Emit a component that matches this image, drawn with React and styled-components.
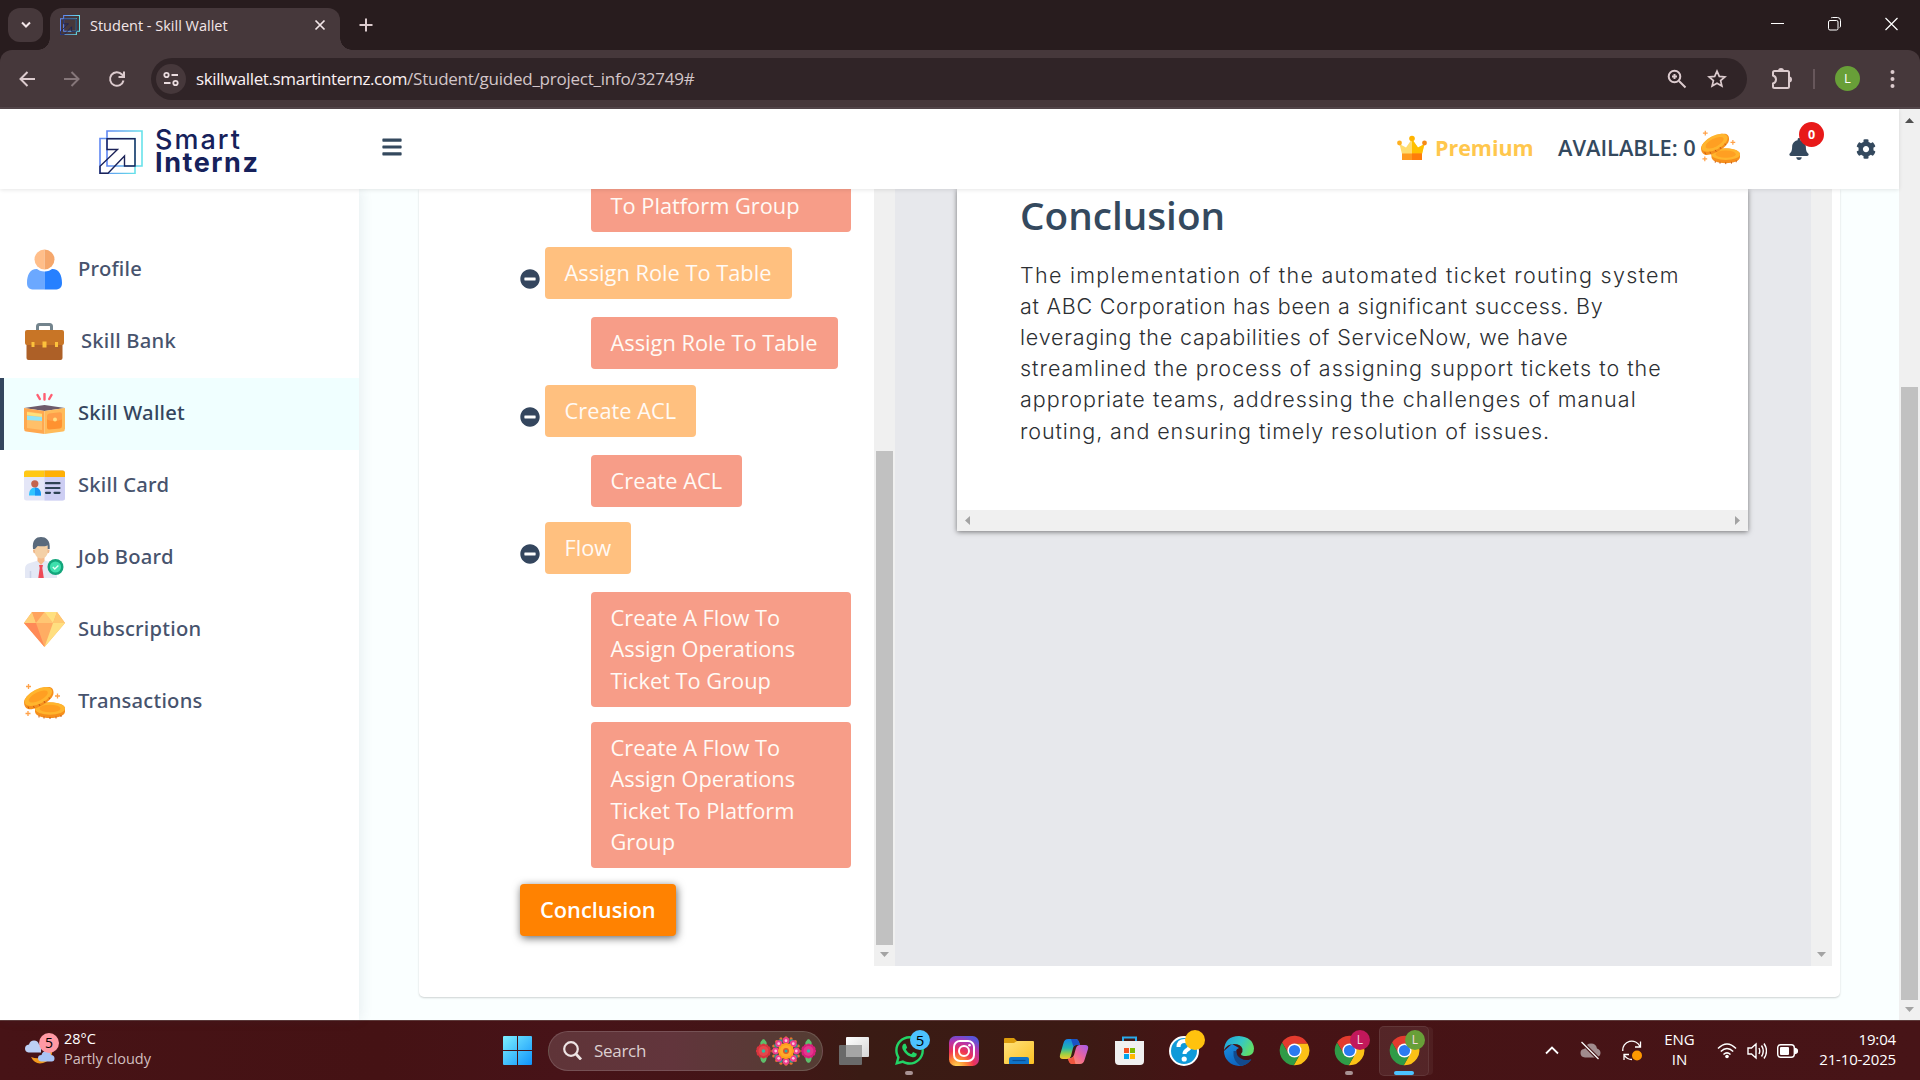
import React from "react";
import styled, { createGlobalStyle, css } from "styled-components";
import { FaBars, FaBell, FaCog, FaMinusCircle, FaWhatsapp } from "react-icons/fa";

const OPEN = `"Open Sans", "Noto Sans", sans-serif`;
const NOTO = `"Noto Sans", "Open Sans", sans-serif`;
const SYS = `"Open Sans", "Noto Sans", sans-serif`;
const GEO = `Inter, Lato, sans-serif`;

const Global = createGlobalStyle`
  * { box-sizing: border-box; }
  body { margin: 0; background: #fff; overflow: hidden; font-family: ${OPEN}; }
  svg { display: block; flex: none; }
`;

const Screen = styled.div`
  width: 1920px;
  height: 1080px;
  display: flex;
  flex-direction: column;
  overflow: hidden;
`;

/* ---------- browser chrome ---------- */
const TabStrip = styled.div`
  height: 50px;
  flex: none;
  background: #281c1e;
  display: flex;
  align-items: flex-start;
  padding: 8px 22px 0 8px;
`;
const TabSearch = styled.div`
  width: 35px;
  height: 34px;
  border-radius: 12px;
  background: #46383b;
  display: flex;
  align-items: center;
  justify-content: center;
`;
const Tab = styled.div`
  position: relative;
  margin-left: 7px;
  width: 290px;
  height: 42px;
  border-radius: 12px 12px 0 0;
  background: #46383b;
  display: flex;
  align-items: center;
  padding: 0 14px 8px 10px;
  color: #f3e6e8;
  &::before, &::after {
    content: "";
    position: absolute;
    bottom: 0;
    width: 12px;
    height: 12px;
  }
  &::before { left: -12px; background: radial-gradient(circle at 0 0, transparent 11.5px, #46383b 12px); }
  &::after { right: -12px; background: radial-gradient(circle at 100% 0, transparent 11.5px, #46383b 12px); }
`;
const TabTitle = styled.span`
  flex: 1;
  margin: 1px 0 0 10px;
  font: 400 14.5px/20px ${SYS};
  white-space: nowrap;
`;
const NewTab = styled.div`
  margin: 10px 0 0 19px;
`;
const WindowControls = styled.div`
  margin: 9px 0 0 auto;
  display: flex;
  align-items: center;
  gap: 44px;
`;
const ToolbarBack = styled.div`
  background: #281c1e;
  flex: none;
`;
const Toolbar = styled.div`
  height: 59px;
  background: #46383b;
  border-radius: 12px 12px 0 0;
  border-bottom: 2px solid #53464a;
  display: flex;
  align-items: center;
  padding-left: 18px;
`;
const NavButtons = styled.div`
  display: flex;
  gap: 27px;
  width: 133px;
`;
const AddressBar = styled.div`
  width: 1596px;
  height: 42px;
  border-radius: 21px;
  background: #302427;
  display: flex;
  align-items: center;
  padding: 0 20px 0 5px;
`;
const SiteInfo = styled.div`
  width: 30px;
  height: 30px;
  border-radius: 50%;
  background: #46383b;
  display: flex;
  align-items: center;
  justify-content: center;
`;
const Url = styled.div`
  flex: 1;
  margin-left: 10px;
  font: 400 17px/26px ${SYS};
  letter-spacing: -0.245px;
  color: #d3c6c9;
  white-space: nowrap;
  b { font-weight: 400; color: #fbf1f3; letter-spacing: -0.38px; }
`;
const AddressActions = styled.div`
  display: flex;
  gap: 20px;
`;
const ToolbarActions = styled.div`
  display: flex;
  align-items: center;
  margin-left: 23px;
`;
const Divider = styled.span`
  width: 2px;
  height: 20px;
  margin: 0 20px;
  background: #67575b;
`;
const ProfileDot = styled.span`
  width: 25px;
  height: 25px;
  border-radius: 50%;
  background: #689f38;
  color: #fff;
  font: 400 13px/25px ${SYS};
  text-align: center;
  margin-right: 30px;
`;

/* ---------- page shell ---------- */
const PageRow = styled.div`
  height: 911px;
  flex: none;
  display: flex;
`;
const Page = styled.div`
  width: 1899px;
  display: flex;
  flex-direction: column;
`;
const Header = styled.header`
  position: relative;
  z-index: 2;
  height: 80px;
  flex: none;
  background: #fff;
  display: flex;
  align-items: center;
  box-shadow: 0 1px 4px rgba(0, 0, 0, 0.1);
`;
const Brand = styled.div`
  width: 359px;
  padding: 5px 0 0 99px;
  display: flex;
  align-items: center;
  gap: 12px;
`;
const BrandName = styled.div`
  color: #16215b;
  font: 500 27px/23px ${GEO};
  padding-bottom: 1px;
  span { display: block; white-space: nowrap; }
`;
const BrandTop = styled.span`
  letter-spacing: 2px;
`;
const BrandBottom = styled.span`
  font-weight: 700;
  letter-spacing: 1.55px;
`;
const MenuToggle = styled.div`
  margin: 0 0 4px 22px;
  color: #34495e;
  font-size: 22px;
`;
const HeaderRight = styled.div`
  margin-left: auto;
  height: 80px;
  display: flex;
  align-items: center;
  color: #34495e;
`;
const CrownWrap = styled.div`
  padding-bottom: 3px;
`;
const CoinWrap = styled.div`
  padding-bottom: 4px;
`;
const Premium = styled.span`
  margin: 0 24px 2px 8px;
  width: 99px;
  font: 700 21.5px/30px ${OPEN};
  letter-spacing: -0.05px;
  color: #ffc74d;
  white-space: nowrap;
`;
const Available = styled.span`
  width: 138px;
  margin: 0 5px 2px 0;
  font: 600 21.8px/30px ${OPEN};
  white-space: nowrap;
`;
const BellWrap = styled.div`
  position: relative;
  margin: 0 46px 0 48px;
  font-size: 22px;
`;
const Badge = styled.span`
  position: absolute;
  left: 11px;
  top: -16px;
  width: 25px;
  height: 25px;
  border-radius: 50%;
  background: #e81919;
  color: #fff;
  font: 700 12.5px/25px ${OPEN};
  text-align: center;
`;
const GearWrap = styled.div`
  font-size: 20px;
  margin: 0 23px 1px 0;
`;
const Body = styled.div`
  flex: 1;
  display: flex;
  min-height: 0;
`;
const Sidebar = styled.nav`
  position: relative;
  z-index: 1;
  width: 359px;
  padding-top: 45px;
  background: #fff;
  box-shadow: 2px 0 12px rgba(40, 70, 90, 0.09);
`;
const NavItem = styled.div`
  height: 72px;
  display: flex;
  align-items: center;
  gap: ${(p) => p.$gap || 13}px;
  padding-left: 20px;
  border-left: 4px solid ${(p) => (p.$active ? "#34465e" : "transparent")};
  background: ${(p) => (p.$active ? "#f0ffff" : "transparent")};
  color: ${(p) => (p.$active ? "#34465e" : "#47536d")};
  > svg { margin-bottom: 1px; }
`;
const NavLabel = styled.span`
  padding-bottom: 5px;
  font: 500 20.2px/28px ${NOTO};
  letter-spacing: 0.22px;
  white-space: nowrap;
`;
const Main = styled.main`
  flex: 1;
  background: #faffff;
  padding-left: 60px;
`;
const Card = styled.section`
  width: 1421px;
  height: 808px;
  background: #fff;
  border-radius: 0 0 5px 5px;
  box-shadow: 0 1px 2px rgba(0, 0, 0, 0.18);
`;
const Panes = styled.div`
  height: 777px;
  display: flex;
`;
const Tree = styled.div`
  width: 455px;
  padding-left: 101px;
`;
const TreeGroup = styled.div`
  margin-top: ${(p) => p.$gap || 0}px;
`;
const StepRow = styled.div`
  display: flex;
  align-items: center;
  gap: 5px;
  color: #34465e;
  font-size: 20px;
  > svg { margin-top: 11px; }
`;
const chip = css`
  border-radius: 4px;
  font: 400 21.8px/31.2px ${OPEN};
  color: #fffaf5;
  padding: 10.2px 19.5px;
`;
const Step = styled.div`
  ${chip}
  height: 52px;
  width: ${(p) => p.$w}px;
  background: #ffc07f;
  white-space: nowrap;
`;
const SubStep = styled.div`
  ${chip}
  margin: ${(p) => (p.$next ? 15 : 18)}px 0 0 71px;
  width: ${(p) => p.$w}px;
  height: ${(p) => p.$h || 52}px;
  background: #f79d88;
  white-space: pre-line;
`;
const ClippedStep = styled(SubStep)`
  margin-top: 0;
  height: 43px;
  padding-top: 1px;
  border-radius: 0 0 4px 4px;
`;
const CurrentStep = styled.div`
  ${chip}
  width: 156px;
  height: 52px;
  padding-left: 20px;
  background: #ff8201;
  color: #fff;
  font-weight: 600;
  box-shadow: 1px 2px 9px rgba(0, 0, 0, 0.6);
`;
const VScroll = styled.div`
  width: 21px;
  flex: none;
  background: #f0f0f0;
  display: flex;
  flex-direction: column;
  align-items: center;
  padding-top: ${(p) => p.$top || 0}px;
  padding-bottom: ${(p) => p.$bottom || 9}px;
  justify-content: space-between;
`;
const Thumb = styled.div`
  width: 17px;
  height: ${(p) => p.$h}px;
  margin-top: ${(p) => p.$mt || 0}px;
  background: #c1c1c1;
`;
const Viewer = styled.div`
  width: 916px;
  background: #e7e8ec;
  padding-left: 62px;
`;
const Paper = styled.article`
  width: 791px;
  height: 342px;
  background: #fff;
  box-shadow: 0 1px 5px rgba(0, 0, 0, 0.5);
  display: flex;
  flex-direction: column;
`;
const PaperText = styled.div`
  flex: 1;
  padding: 0 0 0 63px;
`;
const Title = styled.h1`
  margin: 0 0 18.5px;
  font: 600 38.7px/52px ${OPEN};
  color: #34495e;
`;
const Line = styled.div`
  font: 300 21.5px/31.2px ${GEO};
  letter-spacing: ${(p) => p.$ls || 0}px;
  color: #2c2f33;
  white-space: nowrap;
`;
const HScroll = styled.div`
  height: 21px;
  background: #f0f0f0;
  display: flex;
  align-items: center;
  justify-content: space-between;
  padding: 0 8px 0 8px;
`;

/* ---------- task bar ---------- */
const Taskbar = styled.footer`
  height: 60px;
  flex: none;
  border-top: 1px solid #5d3a3a;
  background: linear-gradient(90deg, #471316 0, #451214 380px, #471318 560px, #431517 760px, #3a1b14 860px, #3c1a14 1080px, #461315 1200px, #471417 1920px);
  display: flex;
  align-items: center;
`;
const Weather = styled.div`
  width: 503px;
  padding-left: 24px;
  display: flex;
  align-items: center;
  gap: 6px;
  font: 400 14.5px/20px ${SYS};
  color: #fff;
`;
const WeatherText = styled.div`
  padding-bottom: 3px;
`;
const Spaced = styled.div`
  white-space: nowrap;
`;
const Faint = styled(Spaced)`
  color: #d2bfbf;
`;
const SearchBox = styled.div`
  margin-left: 16px;
  width: 275px;
  height: 40px;
  border-radius: 20px;
  border: 1px solid rgba(255, 255, 255, 0.14);
  background: linear-gradient(90deg, #5f3438, #62353c 45%, #583a35 80%, #543c33);
  display: flex;
  align-items: center;
  padding: 0 6px 0 14px;
  font: 400 17px/24px ${SYS};
  letter-spacing: -0.3px;
  color: #dccfd0;
  > span { flex: 1; margin-left: 12px; }
`;
const Apps = styled.div`
  display: flex;
  margin-left: 6px;
`;
const AppSlot = styled.div`
  position: relative;
  width: 50px;
  height: 50px;
  margin-right: 5px;
  border-radius: 5px;
  border: 1px solid ${(p) => (p.$on ? "rgba(255,255,255,.08)" : "transparent")};
  background: ${(p) => (p.$on ? "rgba(255,255,255,.08)" : "transparent")};
  box-shadow: ${(p) => (p.$on ? "5px 0 0 -1px rgba(255,255,255,.05)" : "none")};
  display: flex;
  align-items: center;
  justify-content: center;
  &::after {
    content: "";
    position: absolute;
    bottom: 0;
    width: ${(p) => (p.$on ? 20 : 8)}px;
    height: 4px;
    border-radius: 2px;
    background: ${(p) => (p.$on ? "#4cc2ff" : p.$open ? "#a89293" : "transparent")};
  }
`;
const AppBadge = styled.span`
  position: absolute;
  left: 25px;
  top: 3px;
  width: 20px;
  height: 20px;
  border-radius: 50%;
  background: ${(p) => p.$bg};
  color: ${(p) => p.$fg || "#f5d9e3"};
  font: 400 ${(p) => p.$fs || 12}px/20px ${SYS};
  text-align: center;
`;
const WeatherIcon = styled.div`
  position: relative;
  width: 34px;
  height: 34px;
`;
const WeatherBadge = styled(AppBadge)`
  left: 15px;
  top: -1px;
  background: #ff99a4;
  color: #000;
`;
const Tray = styled.div`
  margin-left: auto;
  padding-right: 24px;
  display: flex;
  align-items: center;
  color: #fff;
  font: 400 15px/20px ${SYS};
`;
const Lang = styled.div`
  width: 31px;
  margin: 0 22px 0 22px;
  padding-bottom: 3px;
  text-align: center;
`;
const Clock = styled.div`
  width: 80px;
  margin-left: 18px;
  padding-bottom: 3px;
  letter-spacing: -0.15px;
  display: flex;
  flex-direction: column;
  align-items: flex-end;
`;
const TrayIcons = styled.div`
  display: flex;
  align-items: center;
  gap: ${(p) => p.$gap}px;
`;

/* ---------- drawings ---------- */
const Arrow = ({ dir = "down", color = "#a3a3a3" }) => {
  const d = { down: "M0 0h9L4.5 5z", up: "M0 5h9L4.5 0z", left: "M5 0v9L0 4.5z", right: "M0 0v9L5 4.5z" }[dir];
  const v = dir === "down" || dir === "up";
  return (
    <svg width={v ? 9 : 5} height={v ? 5 : 9}><path d={d} fill={color} /></svg>
  );
};

const LogoMark = ({ size = 44, sw = 1, id = "g" }) => (
  <svg width={size} height={size} viewBox="0 0 44 44" fill="none">
    <defs>
      <linearGradient id={id} x1="0" x2="1"><stop offset="0" stopColor="#5f86f2" /><stop offset="1" stopColor="#67e2ea" /></linearGradient>
    </defs>
    <path d="M8 1h35v35H8z" stroke={`url(#${id})`} strokeWidth={1.6 * sw} />
    <path d="M1 8.500h35v35H1z" stroke={`url(#${id})`} strokeWidth={1.6 * sw} />
    <path d="M8 9.500V8.800h28V36H25.500V26L9 43.200H1v-7L18.500 19.500H8z" stroke="#1b2258" strokeWidth={1.4 * sw} />
  </svg>
);

const Crown = () => (
  <svg width="30" height="26" viewBox="0 0 30 26">
    <path d="M2.500 9 9 12.500 15 4l6 8.500L27.500 9 25 19H5z" fill="#ffdc6e" />
    <path d="M15 4l6 8.500L27.500 9 25 19H15z" fill="#ffc000" />
    <path d="M5 18.500h20V25H5z" fill="#ff9a1f" /><path d="M15 18.500h10V25H15z" fill="#ff7d0a" />
    <circle cx="2.500" cy="8" r="2.400" fill="#ffb020" /><circle cx="27.500" cy="8" r="2.400" fill="#f58a16" /><circle cx="15" cy="3.500" r="2.800" fill="#ffb400" />
  </svg>
);

const Coins = ({ w = 41, h = 41 }) => (
  <svg width={w} height={h} viewBox="0 0 41 41">
    <path d="M11 27.500c0-3.500 6.500-6 15-6s15 2.500 15 6v3c0 4-6.500 6.500-15 6.500s-15-2.500-15-6.500z" fill="#f68f1c" />
    <ellipse cx="26" cy="27.500" rx="15" ry="6.200" fill="#ffb52e" />
    <ellipse cx="26" cy="27.500" rx="10.500" ry="3.800" fill="#ff9f22" />
    <path d="M15 34.500v2M20 35.500v2M26 36v2M32 35.500v2M37 34v2" stroke="#c75a10" strokeWidth="1" />
    <path d="M0 21C1 13 19 4 27 6.500c2 1 2.500 3 2.500 5.500C29 20 11 30 4 28c-3-1-4-4-4-7z" fill="#f68f1c" />
    <ellipse cx="14.300" cy="15.500" rx="15" ry="7.300" transform="rotate(-27 14.300 15.500)" fill="#ffb52e" />
    <ellipse cx="14.300" cy="15.500" rx="10.500" ry="4.300" transform="rotate(-27 14.300 15.500)" fill="#ff9f22" />
    <path d="M4 25.500l.8 2M9.500 25l.8 2M15 23l1 2M20 20l1 2M25 16.500l1 1.500" stroke="#c75a10" strokeWidth="1" />
    <path d="M4.500 3v5M2 5.500h5M33.500 12.500v5M31 15h5M4 30v5M1.500 32.500h5" stroke="#ffa24a" strokeWidth="1.300" />
  </svg>
);

const ProfileIcon = () => (
  <svg width="41" height="41" viewBox="0 0 41 41">
    <path d="M20.500 22c-3 0-5-2-8-2C6 20 3 26 3 34c0 5 3 6.500 7 6.500h10.500z" fill="#6ba8ff" />
    <path d="M20.500 22c3 0 5-2 8-2C35 20 38 26 38 34c0 5-3 6.500-7 6.500H20.500z" fill="#2680ff" />
    <circle cx="20.500" cy="10.500" r="12" fill="#fff" />
    <path d="M20.500.5a10 10 0 0 0 0 20z" fill="#ffbe8a" /><path d="M20.500.5a10 10 0 0 1 0 20z" fill="#f5a76c" />
  </svg>
);
const BriefcaseIcon = () => (
  <svg width="41" height="41" viewBox="0 0 41 41">
    <path d="M13.500 9V5.500q0-2 2-2h10q2 0 2 2V9" fill="none" stroke="#73848d" strokeWidth="3" />
    <path d="M2.500 20h36v17q0 2-2 2h-32q-2 0-2-2z" fill="#ad6027" />
    <path d="M1 11q0-2 2-2h35q2 0 2 2v11q0 2-2 2H3q-2 0-2-2z" fill="#c87526" />
    <path d="M7.500 21h3v5h-3zM18.500 20.500h4V26.500h-4zM31 21h3v5h-3z" fill="#fcc23c" />
  </svg>
);
const WalletIcon = () => (
  <svg width="41" height="41" viewBox="0 0 41 41">
    <path d="M13.500 2l2.300 4M20.500 1v5.500M27.500 2l-2.300 4" stroke="#ff5f72" strokeWidth="2.400" strokeLinecap="round" />
    <path d="M0 15l20.500-3L41 15l-20.500 3z" fill="#6b5b6b" />
    <path d="M0 15l20.500 3v23L2 38.500q-2-.5-2-3z" fill="#ffa84f" />
    <path d="M3 18.500l15 2V37L3 35z" fill="#ffc069" /><path d="M3 19l15 2v3l-15-2z" fill="#ffe07a" /><path d="M3 22.500l15 1.500v4L3 27z" fill="#93e4f5" />
    <path d="M41 15l-20.500 3v23L39 38.500q2-.5 2-3z" fill="#ffbb5a" />
    <path d="M23 23q0-2 2-2.500l11-1.300q2 0 2 2V29H23z" fill="#ff9f4a" /><path d="M23 26.500q7 3 15 0V33q0 2-2 2.500l-11 1q-2 0-2-2z" fill="#ff9230" />
    <circle cx="31" cy="26.500" r="2" fill="#ffdf80" />
  </svg>
);
const CardIcon = () => (
  <svg width="41" height="41" viewBox="0 0 41 41">
    <rect y="5.500" width="41" height="30" rx="2.500" fill="#e4e6f7" /><path d="M20.500 5.500H38.500q2.500 0 2.500 2.500v25q0 2.500-2.500 2.500h-18z" fill="#cdcef3" />
    <path d="M0 12V8q0-2.500 2.500-2.500h18V12z" fill="#ffc815" /><path d="M20.500 12h20.500V8q0-2.500-2.500-2.500h-18z" fill="#ffb005" />
    <path d="M5 30.500c0-5 2-8 6-8s6 3 6 8z" fill="#31c5ff" /><path d="M11 22.500c4 0 6 3 6 8h-6z" fill="#1a96f5" />
    <circle cx="10.800" cy="18.800" r="3.600" fill="#c4624c" />
    <path d="M22 18.200h13.500M22 23h13.500M22 27.800h4M30.500 27.800h5" stroke="#2e4254" strokeWidth="2.200" strokeLinecap="round" />
  </svg>
);
const JobIcon = () => (
  <svg width="41" height="41" viewBox="0 0 41 41">
    <path d="M1 41V32q0-5 5-6l8-2.500h7l7 2.500q5 1 5 6v9z" fill="#e4e8f5" />
    <path d="M6.500 41v-7" stroke="#cbd2e6" strokeWidth="1.500" />
    <path d="M13.500 18h7v6l-3.500 4-3.500-4z" fill="#f5b98a" />
    <path d="M10.500 9h13.500v6q-1.500 6.500-6.800 6.500T10.500 15z" fill="#f4d0a6" />
    <path d="M9 12.500h2v4q-2-.5-2-2.500zM25.500 12.500h-2v4q2-.5 2-2.500z" fill="#f0b88a" />
    <path d="M9 12C8 3 12 0 17 0s9.500 3 8.700 12h-2V8.500c-3 1-7 1-10 .5L11 12z" fill="#5a6a7c" />
    <path d="M15 28h4l-.7 3 1.500 10h-5.500l1.400-10z" fill="#ee4a57" />
    <circle cx="31.500" cy="30" r="8" fill="#13a57b" /><circle cx="31.500" cy="30" r="5.600" fill="#3fe0ad" />
    <path d="M28.800 30l2 2 3.600-3.400" fill="none" stroke="#e4fff6" strokeWidth="1.400" />
  </svg>
);
const DiamondIcon = () => (
  <svg width="41" height="41" viewBox="0 0 41 41">
    <path d="M8 3h25l8 11-20.500 24L0 14z" fill="#ffad63" />
    <path d="M0 14h12l8.500 24z" fill="#ff8a57" /><path d="M41 14H29l-8.500 24z" fill="#ffdf80" />
    <path d="M8 3l4 11H0z" fill="#ffcf77" /><path d="M8 3h12.500L12 14z" fill="#ffa35d" /><path d="M20.500 3L29 14H12z" fill="#ffc673" /><path d="M20.500 3H33l-4 11z" fill="#ffe07f" /><path d="M33 3l8 11H29z" fill="#ffc870" />
  </svg>
);

const ChromeIcon = () => (
  <svg width="31" height="31" viewBox="1 1 46 46">
    <path d="M24 14H43.600A22 22 0 0 0 5.540 12.030L15.340 29A10 10 0 0 1 24 14z" fill="#e33b2e" />
    <path d="M43.600 14A22 22 0 0 1 22.860 45.970L32.660 29A10 10 0 0 0 24 14z" fill="#fbc116" />
    <path d="M5.540 12.030A22 22 0 0 0 22.860 45.970L32.660 29A10 10 0 0 1 15.340 29z" fill="#2f9b47" />
    <circle cx="24" cy="24" r="10.500" fill="#fff" /><circle cx="24" cy="24" r="8.300" fill="#2b7af0" />
  </svg>
);
const WindowsIcon = () => (
  <svg width="29" height="29" viewBox="0 0 29 29">
    <defs><linearGradient id="win" gradientUnits="userSpaceOnUse" x1="0" y1="0" x2="29" y2="29"><stop offset="0" stopColor="#7df0ff" /><stop offset="1" stopColor="#0f93fb" /></linearGradient></defs>
    <path d="M0 1q0-1 1-1h13v14H0zM15 0h13q1 0 1 1v13H15zM0 15h14v14H1q-1 0-1-1zM15 15h14v13q0 1-1 1H15z" fill="url(#win)" />
  </svg>
);
const Petals = ({ cx, cy, r, n, pr, fill }) =>
  Array.from({ length: n }, (_, i) => {
    const a = (i / n) * Math.PI * 2;
    return <circle key={i} cx={cx + r * Math.cos(a)} cy={cy + r * Math.sin(a)} r={pr} fill={fill} />;
  });
const Flowers = () => (
  <svg width="60" height="30" viewBox="0 0 60 30">
    <path d="M7.500 3.500q5 4.500 0 9-5-4.500 0-9M7.500 26.500q5-4.500 0-9-5 4.500 0 9M52.500 3.500q5 4.500 0 9-5-4.500 0-9M52.500 26.500q5-4.500 0-9-5 4.500 0 9" fill="#5fbf6b" stroke="#5fbf6b" strokeWidth="1.500" />
    <Petals cx={30} cy={15} r={13.300} n={16} pr={1.500} fill="#e8742c" />
    <Petals cx={30} cy={15} r={11} n={12} pr={2.200} fill="#1f9a8d" />
    <Petals cx={30} cy={15} r={10.300} n={8} pr={3.400} fill="#ee3d8d" />
    <Petals cx={30} cy={15} r={10.300} n={8} pr={1.400} fill="#ffc3dc" />
    <Petals cx={30} cy={15} r={6} n={12} pr={2.200} fill="#ff9d1c" /><circle cx="30" cy="15" r="6" fill="#ffab2a" /><circle cx="30" cy="15" r="3" fill="#e0562a" /><circle cx="30" cy="15" r="1.500" fill="#27b3a8" />
    <Petals cx={7.500} cy={15} r={5.600} n={12} pr={2} fill="#d8343e" /><circle cx="7.500" cy="15" r="5" fill="#e4484c" /><circle cx="7.500" cy="15" r="1.800" fill="#2cc0a4" />
    <Petals cx={52.500} cy={15} r={5.600} n={12} pr={2} fill="#d81f7c" /><circle cx="52.500" cy="15" r="5" fill="#e6358e" /><circle cx="52.500" cy="15" r="1.800" fill="#2cc0a4" />
  </svg>
);
const TaskViewIcon = () => (
  <svg width="30" height="28" viewBox="0 0 30 28">
    <defs><linearGradient id="tv" x1="0" y1="0" x2="1" y2="1"><stop offset="0" stopColor="#fff" /><stop offset="1" stopColor="#d6d6d6" /></linearGradient></defs>
    <rect y="8" width="23" height="20" rx="1" fill="#6a6a6a" /><rect x="7" width="23" height="20" rx="1" fill="url(#tv)" /><rect x="7" y="8" width="16" height="12" fill="#a5a5a5" />
  </svg>
);
const InstagramIcon = () => (
  <svg width="30" height="30" viewBox="0 0 30 30">
    <defs>
      <radialGradient id="ig" cx=".27" cy="1.050" r="1.100"><stop offset="0" stopColor="#ffe05a" /><stop offset=".28" stopColor="#fd8a33" /><stop offset=".52" stopColor="#ee3257" /><stop offset=".8" stopColor="#b535ae" /><stop offset="1" stopColor="#5a55da" /></radialGradient>
    </defs>
    <rect width="30" height="30" rx="6.500" fill="url(#ig)" />
    <rect x="5" y="5" width="20" height="20" rx="6" fill="none" stroke="#fff" strokeWidth="2" /><circle cx="15" cy="15" r="5" fill="none" stroke="#fff" strokeWidth="2" /><circle cx="20.500" cy="9.300" r="1.300" fill="#fff" />
  </svg>
);
const FolderIcon = () => (
  <svg width="30" height="28" viewBox="0 0 30 28">
    <path d="M0 2q0-1 1-1h9l3 3h10v6H0z" fill="#dc9c0c" />
    <defs><linearGradient id="fo" x1="0" y1="0" x2="1" y2="1"><stop offset="0" stopColor="#ffe27c" /><stop offset="1" stopColor="#fcc123" /></linearGradient></defs>
    <path d="M0 6h10l3-2h16q1 0 1 1v21q0 1-1 1H1q-1 0-1-1z" fill="url(#fo)" />
    <path d="M5 27v-5q0-2 2-2h16q2 0 2 2v5z" fill="#0f74c9" /><path d="M8.500 23.500h13" stroke="#0a4f94" strokeWidth="1.200" />
  </svg>
);
const CopilotIcon = () => (
  <svg width="30" height="30" viewBox="0 0 30 30">
    <defs>
      <linearGradient id="c1" x1="0" y1="0" x2="0" y2="1"><stop offset="0" stopColor="#1683ea" /><stop offset=".45" stopColor="#22b5b0" /><stop offset=".75" stopColor="#9bd044" /><stop offset="1" stopColor="#f6c52d" /></linearGradient>
      <linearGradient id="c2" x1="1" y1="0" x2="0" y2="1"><stop offset="0" stopColor="#a35bf0" /><stop offset=".5" stopColor="#ee6598" /><stop offset="1" stopColor="#ffa35a" /></linearGradient>
    </defs>
    <path d="M9 3h8q2 0 3 3l1 3h-4q-2 0-3 3l-2 8q-1 3-4 3H4q-4 0-3-4L4.500 7Q5.500 3 9 3z" fill="url(#c1)" />
    <path d="M17 3q2 0 3 3l1 3h-4q-1.500 0-2.500 2L12 3z" fill="#1b52c4" />
    <path d="M21 28h-8q-2 0-3-3l-1-3h3q2 0 3-3l2-7q1-3 4-3h5q4 0 3 4l-3.500 11Q24.500 28 21 28z" fill="url(#c2)" />
    <path d="M13 28q-3 0-4-5l3-1q1.500 0 2.500-2l2 8z" fill="#f0573f" />
  </svg>
);
const StoreIcon = () => (
  <svg width="29" height="30" viewBox="0 0 29 30">
    <path d="M8 6V1.500h13V6" fill="none" stroke="#29a9ea" strokeWidth="2" />
    <path d="M0 5h29v20q0 4-4 4H4q-4 0-4-4z" fill="#f0f0f0" />
    <path d="M9 12h5v5H9z" fill="#f25022" /><path d="M15 12h5v5h-5z" fill="#7fba00" /><path d="M9 18h5v5H9z" fill="#00a4ef" /><path d="M15 18h5v5h-5z" fill="#ffb900" />
  </svg>
);
const HelpIcon = () => (
  <svg width="30" height="30" viewBox="0 0 30 30">
    <circle cx="15" cy="15" r="14" fill="#0f9ad9" stroke="#fff" strokeWidth="2" />
    <path d="M9.500 11q0-6 6-6 5.500 0 5.500 4.500 0 3-3 4.500-2.500 1.500-2.500 4" fill="none" stroke="#fff" strokeWidth="4" /><circle cx="15.200" cy="23" r="2.600" fill="#fff" />
  </svg>
);
const EdgeIcon = () => (
  <svg width="30" height="30" viewBox="0 0 30 30">
    <defs>
      <linearGradient id="e1" x1="0" y1="0" x2="1" y2=".4"><stop offset="0" stopColor="#1f9fe0" /><stop offset=".6" stopColor="#35c7c4" /><stop offset="1" stopColor="#5fdc6c" /></linearGradient>
      <linearGradient id="e2" x1="0" y1="0" x2=".6" y2="1"><stop offset="0" stopColor="#1a8fe0" /><stop offset="1" stopColor="#0c60bd" /></linearGradient>
    </defs>
    <path d="M0 15A15 15 0 0 0 15 30Q22 30 27 24q-5 2.500-9.500.5Q12 22 12 16q0-3 3-4L8 8z" fill="url(#e2)" />
    <path d="M9.500 15q-1 10 7 14.800Q22.500 29.500 27 24q.8-1-.5-.8-5 2-9.500-.7-5-3-4.500-7.500z" fill="#134a8d" />
    <path d="M0 14Q1 0 15 0q14 1 15 12.500 0 7.500-8 7.500-5 0-5-2 2-2 1.500-5Q17 8 10 8 3 8 0 14z" fill="url(#e1)" />
  </svg>
);
const WeatherDrawing = () => (
  <svg width="34" height="34" viewBox="0 0 34 34">
    <path d="M28 12q2 14-9 17-8 2-12-6 8 3 13-1t3-11z" fill="#f39a1d" />
    <path d="M4.500 18.500q-3.500-.5-3.500-4t4-4q1-4 5-4t5 4h2v8z" fill="#bcd0f5" />
    <path d="M17 27.500q-3-.5-3-3.500t3.500-3q1-4 5-4t4.500 4q3.500 0 3.500 3.500T27 27.500z" fill="#a9c4f5" />
  </svg>
);

const NAV = [
  ["Profile", ProfileIcon],
  ["Skill Bank", BriefcaseIcon],
  ["Skill Wallet", WalletIcon],
  ["Skill Card", CardIcon],
  ["Job Board", JobIcon],
  ["Subscription", DiamondIcon],
  ["Transactions", Coins],
];
const LINES = [
  ["The implementation of the automated ticket routing system", 1.29],
  ["at ABC Corporation has been a significant success. By", 0.75],
  ["leveraging the capabilities of ServiceNow, we have", 0.81],
  ["streamlined the process of assigning support tickets to the", 1.0],
  ["appropriate teams, addressing the challenges of manual", 1.05],
  ["routing, and ensuring timely resolution of issues.", 0.91],
];

const stroke = { fill: "none", stroke: "#dccbce", strokeWidth: 2 };

export default function App() {
  return (
    <Screen>
      <Global />
      <TabStrip>
        <TabSearch><svg width="12" height="10"><path d="M2 2.500l4 4 4-4" fill="none" stroke="#f3e6e8" strokeWidth="2" /></svg></TabSearch>
        <Tab>
          <LogoMark size={20} sw={1.4} id="fav" />
          <TabTitle>Student - Skill Wallet</TabTitle>
          <svg width="12" height="12"><path d="M1.500 1.500l9 9M10.500 1.500l-9 9" stroke="#f3e6e8" strokeWidth="1.700" /></svg>
        </Tab>
        <NewTab><svg width="14" height="14"><path d="M7 .5v13M.5 7h13" stroke="#dccbce" strokeWidth="2" /></svg></NewTab>
        <WindowControls>
          <svg width="13" height="14"><path d="M0 6.500h13" stroke="#fff" /></svg>
          <svg width="13" height="14" fill="none" stroke="#fff"><rect x=".5" y="3.500" width="9.500" height="9.500" rx="1.500" /><path d="M3 1q.5-.5 1.500-.5h5q3 0 3 3V9q0 1-.7 1.500" /></svg>
          <svg width="13" height="14"><path d="M.5 1l12 12M12.500 1l-12 12" stroke="#fff" strokeWidth="1.200" /></svg>
        </WindowControls>
      </TabStrip>
      <ToolbarBack>
        <Toolbar>
          <NavButtons>
            <svg width="18" height="18" {...stroke}><path d="M17 9H3M9.500 2L2.500 9l7 7" /></svg>
            <svg width="18" height="18" {...stroke} stroke="#857679"><path d="M1 9h14M8.500 2l7 7-7 7" /></svg>
            <svg width="18" height="18" {...stroke}><path d="M15.500 10.500A6.800 6.800 0 1 1 14 4.500l1.500 2M16 1.500v5.500h-5.500" /></svg>
          </NavButtons>
          <AddressBar>
            <SiteInfo>
              <svg width="16" height="16" {...stroke} stroke="#eadcdf" strokeWidth="1.800"><circle cx="3.500" cy="4" r="2.200" /><path d="M8.500 4H15M1 12h6.500" /><circle cx="12.500" cy="12" r="2.200" /></svg>
            </SiteInfo>
            <Url><b>skillwallet.smartinternz.com</b>/Student/guided_project_info/32749#</Url>
            <AddressActions>
              <svg width="20" height="20" {...stroke}><circle cx="7.500" cy="7.500" r="5.800" /><path d="M12 12l6.500 6.500M7.500 5v5M5 7.500h5" /></svg>
              <svg width="20" height="20" {...stroke} strokeWidth="1.700"><path d="M10 2.200l2.300 5.200 5.600.5-4.300 3.700 1.300 5.500-4.900-2.900-4.900 2.900 1.300-5.500L2.100 7.900l5.600-.5z" /></svg>
            </AddressActions>
          </AddressBar>
          <ToolbarActions>
            <svg width="23" height="23" {...stroke}><path d="M3 5.500q0-1.500 1.500-1.500h13Q19 4 19 5.500v14q0 1.500-1.500 1.500h-13Q3 21 3 19.500V16.500q3-1 3-4t-3-4z" /><path d="M8 4a3 3 0 0 1 6 0zM19 9.500a3 3 0 0 1 0 6z" fill="#dccbce" stroke="none" /></svg>
            <Divider />
            <ProfileDot>L</ProfileDot>
            <svg width="5" height="20" fill="#dccbce"><circle cx="2.500" cy="3" r="2" /><circle cx="2.500" cy="10" r="2" /><circle cx="2.500" cy="17" r="2" /></svg>
          </ToolbarActions>
        </Toolbar>
      </ToolbarBack>

      <PageRow>
        <Page>
          <Header>
            <Brand>
              <LogoMark id="brand" />
              <BrandName><BrandTop>Smart</BrandTop><BrandBottom>Internz</BrandBottom></BrandName>
            </Brand>
            <MenuToggle><FaBars /></MenuToggle>
            <HeaderRight>
              <CrownWrap><Crown /></CrownWrap>
              <Premium>Premium</Premium>
              <Available>AVAILABLE: 0</Available>
              <CoinWrap><Coins w={39} h={39} /></CoinWrap>
              <BellWrap><FaBell /><Badge>0</Badge></BellWrap>
              <GearWrap><FaCog /></GearWrap>
            </HeaderRight>
          </Header>
          <Body>
            <Sidebar>
              {NAV.map(([label, Icon]) => (
                <NavItem key={label} $active={label === "Skill Wallet"} $gap={label === "Skill Bank" ? 16 : 13}>
                  <Icon /><NavLabel>{label}</NavLabel>
                </NavItem>
              ))}
            </Sidebar>
            <Main>
              <Card>
                <Panes>
                  <Tree>
                    <TreeGroup><ClippedStep $w={260}>To Platform Group</ClippedStep></TreeGroup>
                    <TreeGroup $gap={15}>
                      <StepRow><FaMinusCircle /><Step $w={247}>Assign Role To Table</Step></StepRow>
                      <SubStep $w={247}>Assign Role To Table</SubStep>
                    </TreeGroup>
                    <TreeGroup $gap={16}>
                      <StepRow><FaMinusCircle /><Step $w={151}>Create ACL</Step></StepRow>
                      <SubStep $w={151}>Create ACL</SubStep>
                    </TreeGroup>
                    <TreeGroup $gap={15}>
                      <StepRow><FaMinusCircle /><Step $w={86}>Flow</Step></StepRow>
                      <SubStep $w={260} $h={115}>{"Create A Flow To\nAssign Operations\nTicket To Group"}</SubStep>
                      <SubStep $w={260} $h={146} $next>{"Create A Flow To\nAssign Operations\nTicket To Platform\nGroup"}</SubStep>
                    </TreeGroup>
                    <TreeGroup $gap={16}><CurrentStep>Conclusion</CurrentStep></TreeGroup>
                  </Tree>
                  <VScroll $top={262}><Thumb $h={494} /><Arrow /></VScroll>
                  <Viewer>
                    <Paper>
                      <PaperText>
                        <Title>Conclusion</Title>
                        {LINES.map(([text, ls]) => <Line key={text} $ls={ls}>{text}</Line>)}
                      </PaperText>
                      <HScroll><Arrow dir="left" /><Arrow dir="right" /></HScroll>
                    </Paper>
                  </Viewer>
                  <VScroll><span /><Arrow /></VScroll>
                </Panes>
              </Card>
            </Main>
          </Body>
        </Page>
        <VScroll $top={9} $bottom={8}>
          <Arrow dir="up" color="#505050" />
          <Thumb $h={613} $mt={257} />
          <Arrow />
        </VScroll>
      </PageRow>

      <Taskbar>
        <Weather>
          <WeatherIcon><WeatherDrawing /><WeatherBadge $bg="#ff99a4" $fs={14}>5</WeatherBadge></WeatherIcon>
          <WeatherText><Spaced>28°C</Spaced><Faint>Partly cloudy</Faint></WeatherText>
        </Weather>
        <WindowsIcon />
        <SearchBox>
          <svg width="19" height="19" fill="none" stroke="#eee4e4" strokeWidth="2.200"><circle cx="8" cy="8" r="6.800" /><path d="M13 13l5 5.500" strokeWidth="2.800" /></svg>
          <span>Search</span>
          <Flowers />
        </SearchBox>
        <Apps>
          <AppSlot><TaskViewIcon /></AppSlot>
          <AppSlot $open><FaWhatsapp size={33} color="#23d366" /><AppBadge $bg="#4cc2ff" $fg="#000" $fs={15}>5</AppBadge></AppSlot>
          <AppSlot><InstagramIcon /></AppSlot>
          <AppSlot><FolderIcon /></AppSlot>
          <AppSlot><CopilotIcon /></AppSlot>
          <AppSlot><StoreIcon /></AppSlot>
          <AppSlot><HelpIcon /><AppBadge $bg="#ffc20e" /></AppSlot>
          <AppSlot><EdgeIcon /></AppSlot>
          <AppSlot><ChromeIcon /></AppSlot>
          <AppSlot $open><ChromeIcon /><AppBadge $bg="#c2185b">L</AppBadge></AppSlot>
          <AppSlot $on><ChromeIcon /><AppBadge $bg="#689f38">L</AppBadge></AppSlot>
        </Apps>
        <Tray>
          <TrayIcons $gap={21}>
            <svg width="14" height="9" fill="none" stroke="#fff" strokeWidth="1.800"><path d="M1 7.500l6-6 6 6" /></svg>
            <svg width="21" height="20"><path d="M5 16.500q-4.500-.5-4.500-4.500T4.500 8Q6 2.500 11 2.500T17 7.500q3.500 1 3.500 4.500T16 16.500z" fill="#a18c8e" /><path d="M1.500 1l17 17" stroke="#471417" strokeWidth="3.500" /><path d="M1.500 1l17 17" stroke="#fff" strokeWidth="1.300" /></svg>
            <svg width="20" height="21" fill="none" stroke="#fff" strokeWidth="1.300"><path d="M.8 11A9 9 0 0 1 18 6.500M18.500 1.500V7H13M10 19.500a9 9 0 0 1-7.500-4M2 20v-5.500h5" /><circle cx="15" cy="15.500" r="5" fill="#ff9800" stroke="none" /></svg>
          </TrayIcons>
          <Lang>ENG<br />IN</Lang>
          <TrayIcons $gap={10}>
            <svg width="20" height="17" fill="none" stroke="#fff" strokeWidth="1.500"><path d="M1 6.500q9-9 18 0M3.800 9.500q6.200-6 12.400 0M6.500 12.500q3.500-3.200 7 0" /><circle cx="10" cy="14.500" r="1.800" fill="#fff" stroke="none" /></svg>
            <svg width="20" height="18" fill="none" stroke="#fff" strokeWidth="1.400"><path d="M1 6h3.500L9 2v14l-4.500-4H1zM12 6q1.500 3 0 6M14.500 3.500q3.500 5.500 0 11M17 1.500q5 7.500 0 15" /></svg>
            <svg width="21" height="14" fill="none" stroke="#fff" strokeWidth="1.400"><rect x=".7" y=".7" width="16.600" height="12.600" rx="3" /><rect x="3" y="3" width="9" height="8" rx="1" fill="#fff" stroke="none" /><path d="M18 4.500q2.500.5 2.500 2.500T18 9.500z" fill="#fff" /></svg>
          </TrayIcons>
          <Clock><Spaced>19:04</Spaced><Spaced>21-10-2025</Spaced></Clock>
        </Tray>
      </Taskbar>
    </Screen>
  );
}
